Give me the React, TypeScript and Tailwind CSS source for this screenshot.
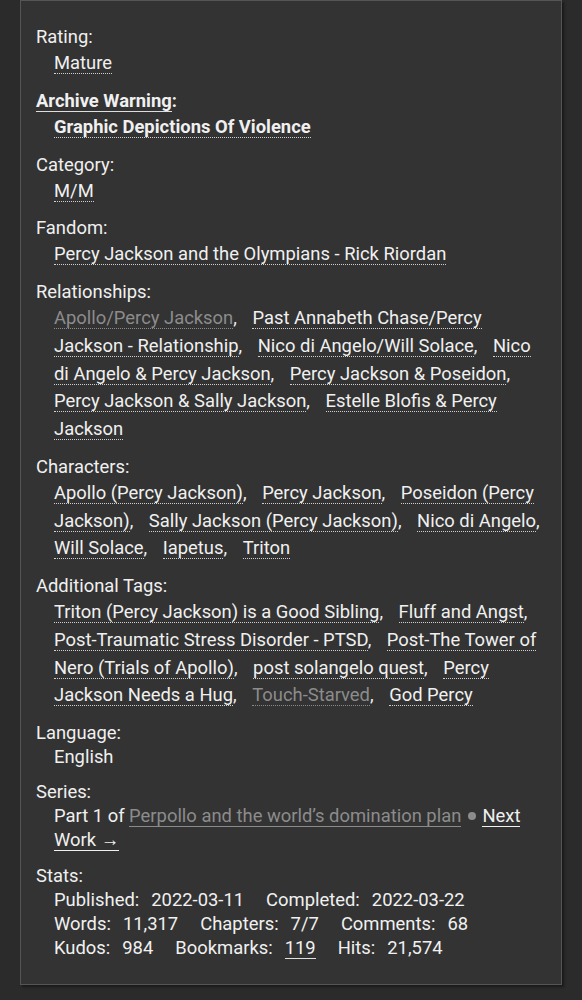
import React from "react";

type Tag = { text: string; dim?: boolean };

const TagList = ({ tags, bold }: { tags: Tag[]; bold?: boolean }) => (
  <ul className="ml-[18px] leading-[27.75px]">
    {tags.map((t, i) => (
      <React.Fragment key={i}>
        <li className="inline">
          <a
            className={
              "border-b border-dotted " +
              (t.dim
                ? "border-[#8a8a8a] text-[#8c8c8c]"
                : "border-[#cfcfcf] text-[#f0f0f0]") +
              (bold ? " font-bold" : "")
            }
          >
            {t.text}
          </a>
          {i < tags.length - 1 ? "," : ""}
        </li>
        {/* gap between tags hangs at line ends */}
        <span className="[word-spacing:11px]"> </span>
      </React.Fragment>
    ))}
  </ul>
);

const Section = ({
  label,
  children,
  tight,
}: {
  label: React.ReactNode;
  children: React.ReactNode;
  tight?: boolean;
}) => (
  <div className={tight ? "mb-[11px]" : "mb-3 last:mb-0"}>
    <div className="leading-6">{label}</div>
    {children}
  </div>
);

const Stat = ({ k, v, last }: { k: string; v: React.ReactNode; last?: boolean }) => (
  <span className={last ? "" : "mr-[22px]"}>
    {k}
    <span className="ml-[12px]">{v}</span>
  </span>
);

const t = (...xs: string[]): Tag[] => xs.map((text) => ({ text }));

const App = () => {
  return (
    <div
      className="min-h-[1000px] bg-[#2b2b2b] px-[20px] pb-[15px] text-[18.4px] text-[#f0f0f0]"
      style={{ fontFamily: "Roboto, 'Liberation Sans', sans-serif" }}
    >
      <div className="border border-[#555555] bg-[#333333] px-[15px] pb-[24px] pt-[24px] shadow-[2px_2px_2px_#1a1a1a]">
        <Section label="Rating:">
          <TagList tags={t("Mature")} />
        </Section>

        <Section
          label={
            <span className="font-bold">
              <span className="border-b border-[#dddddd]">Archive Warning</span>:
            </span>
          }
        >
          <TagList tags={t("Graphic Depictions Of Violence")} bold />
        </Section>

        <Section label="Category:">
          <TagList tags={t("M/M")} />
        </Section>

        <Section label="Fandom:">
          <TagList tags={t("Percy Jackson and the Olympians - Rick Riordan")} />
        </Section>

        <Section label="Relationships:">
          <TagList
            tags={[
              { text: "Apollo/Percy Jackson", dim: true },
              ...t(
                "Past Annabeth Chase/Percy Jackson - Relationship",
                "Nico di Angelo/Will Solace",
                "Nico di Angelo & Percy Jackson",
                "Percy Jackson & Poseidon",
                "Percy Jackson & Sally Jackson",
                "Estelle Blofis & Percy Jackson"
              ),
            ]}
          />
        </Section>

        <Section label="Characters:">
          <TagList
            tags={t(
              "Apollo (Percy Jackson)",
              "Percy Jackson",
              "Poseidon (Percy Jackson)",
              "Sally Jackson (Percy Jackson)",
              "Nico di Angelo",
              "Will Solace",
              "Iapetus",
              "Triton"
            )}
          />
        </Section>

        <Section label="Additional Tags:">
          <TagList
            tags={[
              ...t(
                "Triton (Percy Jackson) is a Good Sibling",
                "Fluff and Angst",
                "Post-Traumatic Stress Disorder - PTSD",
                "Post-The Tower of Nero (Trials of Apollo)",
                "post solangelo quest",
                "Percy Jackson Needs a Hug"
              ),
              { text: "Touch-Starved", dim: true },
              { text: "God Percy" },
            ]}
          />
        </Section>

        <Section label="Language:" tight>
          <div className="ml-[18px] leading-6">English</div>
        </Section>

        <Section label="Series:">
          <div className="ml-[18px] leading-6">
            Part 1 of{" "}
            <a className="border-b border-[#8a8a8a] text-[#8c8c8c]">
              Perpollo and the world’s domination plan
            </a>{" "}
            <span className="mx-[2px] inline-block h-[8px] w-[8px] rounded-full bg-[#8c8c8c] align-[2px]" />{" "}
            <a className="border-b border-[#f0f0f0]">Next Work →</a>
          </div>
        </Section>

        <Section label="Stats:">
          <div className="ml-[18px] leading-6">
            <div>
              <Stat k="Published:" v="2022-03-11" />
              <Stat k="Completed:" v="2022-03-22" last />
            </div>
            <div>
              <Stat k="Words:" v="11,317" />
              <Stat k="Chapters:" v="7/7" />
              <Stat k="Comments:" v="68" last />
            </div>
            <div>
              <Stat k="Kudos:" v="984" />
              <Stat
                k="Bookmarks:"
                v={<a className="border-b border-[#e0e0e0]">119</a>}
              />
              <Stat k="Hits:" v="21,574" last />
            </div>
          </div>
        </Section>
      </div>
    </div>
  );
};

export default App;
